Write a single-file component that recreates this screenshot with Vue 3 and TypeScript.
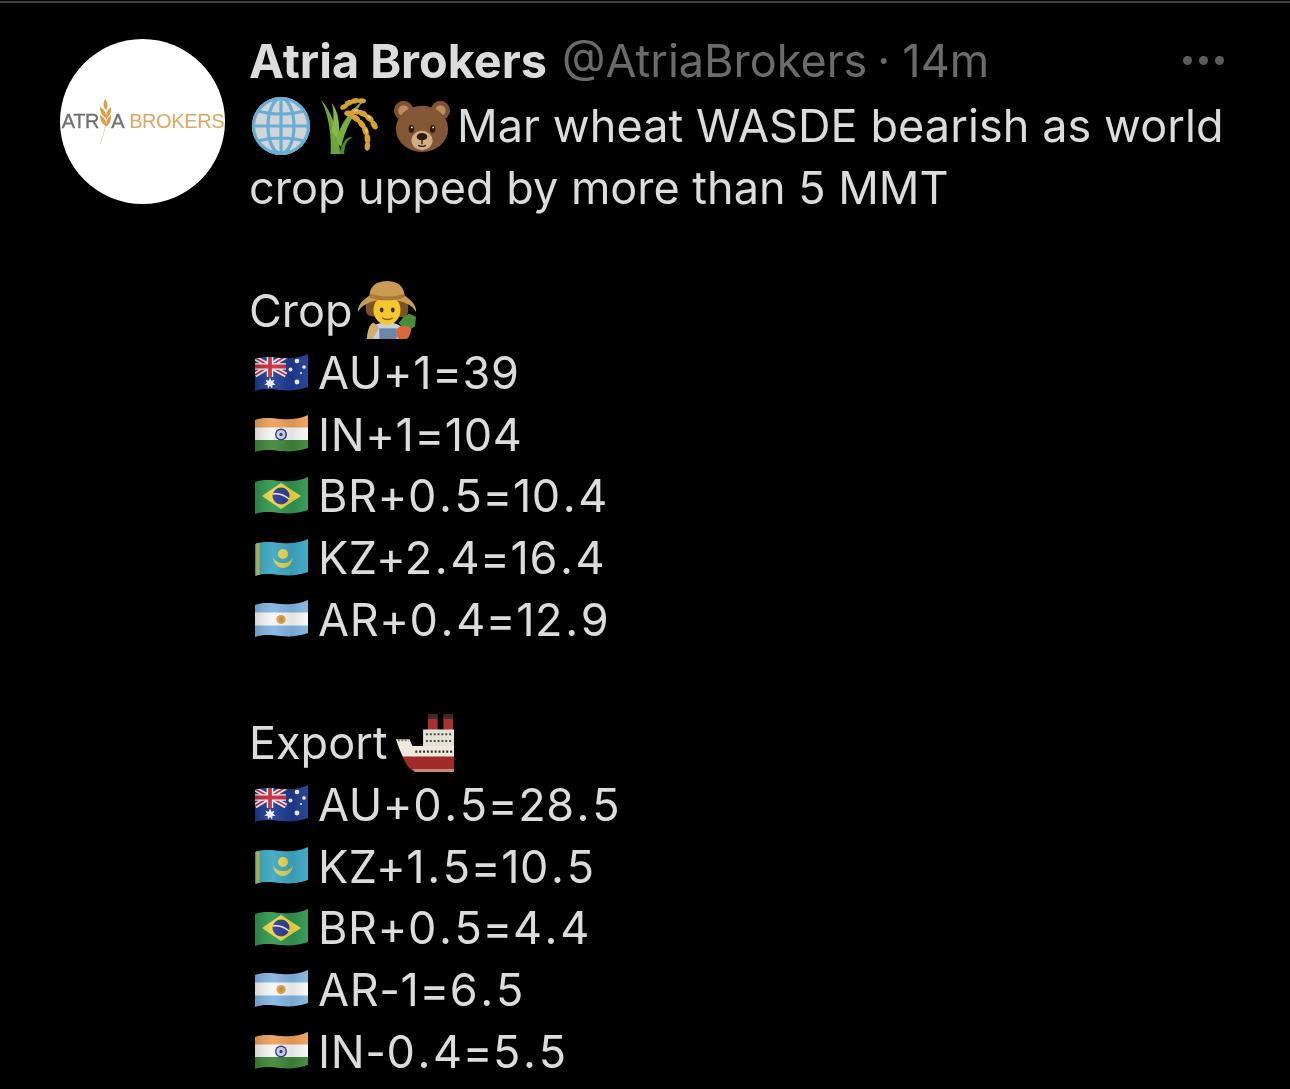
<script setup lang="ts">
interface Row { flag: string; text: string }
const crop: Row[] = [
  { flag: 'au', text: 'AU+1=39' },
  { flag: 'in', text: 'IN+1=104' },
  { flag: 'br', text: 'BR+0.5=10.4' },
  { flag: 'kz', text: 'KZ+2.4=16.4' },
  { flag: 'ar', text: 'AR+0.4=12.9' },
]
const exportRows: Row[] = [
  { flag: 'au', text: 'AU+0.5=28.5' },
  { flag: 'kz', text: 'KZ+1.5=10.5' },
  { flag: 'br', text: 'BR+0.5=4.4' },
  { flag: 'ar', text: 'AR-1=6.5' },
  { flag: 'in', text: 'IN-0.4=5.5' },
]
// Split on the decimal points so they can take the wider spacing of the reference.
const parts = (t: string): string[] => t.split(/(\.)/)
</script>

<template>
  <div class="screen">
    <svg class="defs" width="0" height="0" aria-hidden="true">
      <defs>
        <clipPath id="wave">
          <path d="M0 5C8 2 16 3 26 4S44 4 53 0V33C44 36 36 37 26 36S8 34 0 37Z" />
        </clipPath>
        <linearGradient id="shade" x1="0" x2="1" y1="0" y2="0">
          <stop offset="0" stop-color="#000" stop-opacity=".14" />
          <stop offset=".35" stop-color="#fff" stop-opacity=".08" />
          <stop offset=".7" stop-color="#000" stop-opacity=".08" />
          <stop offset="1" stop-color="#fff" stop-opacity=".06" />
        </linearGradient>
        <g id="flag-au" clip-path="url(#wave)">
          <rect width="53" height="38" fill="#1d3a8f" />
          <path d="M0 4L31 21M31 2L0 21" stroke="#f3f3f5" stroke-width="5" />
          <path d="M0 4L31 21M31 2L0 21" stroke="#c8283c" stroke-width="1.800" />
          <path d="M15 0V23M0 12.500H31" stroke="#f3f3f5" stroke-width="6.500" />
          <path d="M15 0V23M0 12.500H31" stroke="#c8283c" stroke-width="3.800" />
          <g fill="#f2f4fa">
            <path d="M15 23.500l1.400 3.200 3.200-1-1.600 3 2.700 2-3.300.4-.2 3.300-2.200-2.500-2.200 2.500-.2-3.300-3.300-.4 2.700-2-1.600-3 3.200 1z" />
            <circle cx="42" cy="7" r="2.300" />
            <circle cx="35.500" cy="15.500" r="2" />
            <circle cx="49" cy="13" r="1.800" />
            <circle cx="42" cy="28" r="2.400" />
            <circle cx="46" cy="19" r="1.100" />
          </g>
          <rect width="53" height="38" fill="url(#shade)" />
        </g>
        <g id="flag-in" clip-path="url(#wave)">
          <rect width="53" height="14" fill="#eda05a" />
          <rect y="12.500" width="53" height="13" fill="#f6f6f6" />
          <rect y="25" width="53" height="14" fill="#3c8636" />
          <circle cx="26" cy="19.500" r="6" fill="#2f3a86" />
          <circle cx="26" cy="19.500" r="4.500" fill="#cfd3e8" />
          <circle cx="26" cy="19.500" r="1.700" fill="#2f3a86" />
          <rect width="53" height="38" fill="url(#shade)" />
        </g>
        <g id="flag-br" clip-path="url(#wave)">
          <rect width="53" height="38" fill="#2f9650" />
          <path d="M7 19L26 6 46 19 26 32Z" fill="#f0d640" />
          <circle cx="26" cy="19" r="8.500" fill="#2c3a8e" />
          <path d="M18 17C24 16 29 18 34 22" stroke="#eef1f5" stroke-width="1.600" fill="none" />
          <rect width="53" height="38" fill="url(#shade)" />
        </g>
        <g id="flag-kz" clip-path="url(#wave)">
          <rect width="53" height="38" fill="#3ca6c2" />
          <rect x="1" width="3.500" height="38" fill="#bcc25a" />
          <circle cx="28" cy="15" r="5" fill="#e9d44b" />
          <path d="M18 18C19 25 23 29 28 29S37 25 38 18C36 22 33 24 28 24S20 22 18 18Z" fill="#d8cf50" />
          <rect width="53" height="38" fill="url(#shade)" />
        </g>
        <g id="flag-ar" clip-path="url(#wave)">
          <rect width="53" height="38" fill="#82b4e2" />
          <rect y="12.500" width="53" height="13" fill="#f7f7f7" />
          <circle cx="26" cy="19.500" r="4.600" fill="#d9a24b" />
          <circle cx="26" cy="19.500" r="2.200" fill="#c98c35" />
          <rect width="53" height="38" fill="url(#shade)" />
        </g>
      </defs>
    </svg>

    <div class="tweet">
      <div class="avatar">
        <div class="logo">
          <span class="logo-grey">ATR</span>
          <svg class="logo-wheat" viewBox="0 0 14 46" aria-hidden="true">
            <path d="M9 2C9 18 8 30 2 45" stroke="#e6d3b8" stroke-width="1" fill="none" />
            <path d="M7 0C5 4 5 8 8 11 10 8 10 4 7 0ZM2 8C2 13 4 17 8 19 9 15 6 10 2 8ZM13 8C9 11 8 15 8 20 11 18 14 13 13 8ZM2 16C2 21 4 25 8 27 9 23 6 18 2 16ZM13 16C9 19 8 23 8 28 11 26 14 21 13 16Z" fill="#dd9f48" />
          </svg>
          <span class="logo-grey">A</span>
          <span class="logo-gold">BROKERS</span>
        </div>
      </div>

      <div class="body">
        <div class="head">
          <span class="name">Atria Brokers</span>
          <span class="meta">@AtriaBrokers<span class="sep">·</span>14m</span>
          <span class="dots"><i></i><i></i><i></i></span>
        </div>

        <div class="line">
          <svg class="emoji globe" viewBox="0 0 60 60" aria-hidden="true">
            <circle cx="30" cy="30" r="29" fill="#d2d4d8" />
            <g fill="none" stroke="#68aed4" stroke-width="3.200">
              <circle cx="30" cy="30" r="27.500" />
              <ellipse cx="30" cy="30" rx="13" ry="27.500" />
              <path d="M30 2V58M2 30H58M7 15C20 19 40 19 53 15M7 45C20 41 40 41 53 45" />
            </g>
          </svg>
          <svg class="emoji wheat" viewBox="0 0 60 60" aria-hidden="true">
            <path d="M10 59C11 40 8 18 0 3 10 13 18 34 20 59Z" fill="#6ea53a" />
            <path d="M11 36C13 26 14 16 11 6 18 15 20 28 18 44Z" fill="#86b84a" />
            <path d="M16 46C18 30 30 14 44 3 34 18 24 34 21 52Z" fill="#7cad40" />
            <path d="M19 59C22 47 26 40 33 42 27 44 24 50 24 59Z" fill="#4f8a30" />
            <g fill="#d6a037">
              <ellipse cx="24" cy="10" rx="4.500" ry="2.600" transform="rotate(-30 24 10)" />
              <ellipse cx="29" cy="6" rx="4.500" ry="2.800" transform="rotate(-20 29 6)" />
              <ellipse cx="35" cy="4" rx="4.500" ry="2.800" transform="rotate(-10 35 4)" />
              <ellipse cx="42" cy="4" rx="4.500" ry="2.800" />
              <ellipse cx="29" cy="17" rx="5" ry="3" transform="rotate(5 29 17)" />
              <ellipse cx="36" cy="15" rx="5" ry="3" transform="rotate(10 36 15)" />
              <ellipse cx="43" cy="17" rx="5" ry="3" transform="rotate(25 43 17)" />
              <ellipse cx="50" cy="22" rx="5" ry="3" transform="rotate(40 50 22)" />
              <ellipse cx="55" cy="29" rx="5" ry="3" transform="rotate(60 55 29)" />
              <ellipse cx="36" cy="22" rx="5" ry="3" transform="rotate(35 36 22)" />
              <ellipse cx="42" cy="28" rx="5" ry="3" transform="rotate(50 42 28)" />
              <ellipse cx="46" cy="35" rx="5" ry="3" transform="rotate(70 46 35)" />
              <ellipse cx="48" cy="43" rx="5" ry="3" transform="rotate(85 48 43)" />
              <ellipse cx="48" cy="51" rx="4.500" ry="2.800" transform="rotate(95 48 51)" />
            </g>
            <g fill="#efc867">
              <ellipse cx="36" cy="14" rx="2.500" ry="1.100" />
              <ellipse cx="50" cy="21" rx="2.500" ry="1.100" transform="rotate(40 50 21)" />
              <ellipse cx="47" cy="35" rx="2.500" ry="1.100" transform="rotate(70 47 35)" />
            </g>
          </svg>
          <svg class="emoji bear" viewBox="0 0 60 60" aria-hidden="true">
            <circle cx="11" cy="14" r="10" fill="#7e5232" />
            <circle cx="49" cy="14" r="10" fill="#7e5232" />
            <circle cx="11" cy="14" r="5.500" fill="#bd8d62" />
            <circle cx="49" cy="14" r="5.500" fill="#bd8d62" />
            <ellipse cx="30" cy="33" rx="27" ry="24" fill="#835636" />
            <ellipse cx="30" cy="45" rx="11" ry="10" fill="#d3ae86" />
            <ellipse cx="19" cy="33" rx="2.800" ry="4" fill="#2c1a10" />
            <ellipse cx="41" cy="33" rx="2.800" ry="4" fill="#2c1a10" />
            <circle cx="19.500" cy="31.500" r=".9" fill="#fff" />
            <circle cx="41.500" cy="31.500" r=".9" fill="#fff" />
            <ellipse cx="30" cy="41" rx="5.500" ry="3.800" fill="#2a1b14" />
            <path d="M30 44V49M26 50C28 51.500 32 51.500 34 50" stroke="#2a1b14" stroke-width="1.400" fill="none" />
          </svg>
          <span class="first-text">Mar wheat WASDE bearish as world</span>
        </div>
        <div class="line"><span>crop upped by more than 5 MMT</span></div>
        <div class="line"></div>

        <div class="line">
          <span>Crop</span>
          <svg class="emoji farmer" viewBox="0 0 60 60" aria-hidden="true">
            <path d="M10 60C11 48 17 43 30 43S48 48 50 60Z" fill="#c8d0dc" />
            <path d="M9 60C10 50 12 45 16 43L22 48 15 60Z" fill="#d3ad6b" />
            <path d="M22 60V49H40V60Z" fill="#6b86a8" />
            <path d="M8 28C8 14 18 10 30 10S52 14 52 28 44 36 30 36 8 40 8 28Z" fill="#7a5326" />
            <ellipse cx="30" cy="30" rx="14" ry="15.500" fill="#f5c72e" />
            <path d="M0 32C-1 25 6 19 12 15 12 5 20 0 30 0S48 5 48 15C54 19 61 25 60 32 57 26 48 20 30 19 12 20 3 26 0 32Z" fill="#cb9b52" />
            <path d="M12 13C22 17 38 17 48 13V17C38 21 22 21 12 17Z" fill="#a97a35" />
            <ellipse cx="24.500" cy="30" rx="1.900" ry="2.500" fill="#3a2a10" />
            <ellipse cx="36" cy="30" rx="1.900" ry="2.500" fill="#3a2a10" />
            <path d="M25 38C28 40.500 33 40.500 36 38" stroke="#8a5a18" stroke-width="1.500" fill="none" />
            <path d="M42 44L47 37 53 34 60 37 59 47 54 50 47 49Z" fill="#4d8c3a" />
            <path d="M40 50C44 45 52 45 55 50 55 54 52 60 50 60H42C40 58 39 54 40 50Z" fill="#d9683a" />
          </svg>
        </div>
        <div v-for="r in crop" :key="r.flag" class="line">
          <svg class="flag" viewBox="0 0 53 38" aria-hidden="true"><use :href="'#flag-' + r.flag" /></svg>
          <span class="figure"><span v-for="(p, i) in parts(r.text)" :key="i" :class="{ point: p === '.' }">{{ p }}</span></span>
        </div>
        <div class="line"></div>

        <div class="line">
          <span>Export</span>
          <svg class="emoji ship" viewBox="0 0 60 60" aria-hidden="true">
            <rect x="33" y="2" width="10" height="18" fill="#a83230" />
            <rect x="49" y="2" width="10" height="18" fill="#a83230" />
            <rect x="33" y="0" width="10" height="5" fill="#3a2a2a" />
            <rect x="49" y="0" width="10" height="5" fill="#3a2a2a" />
            <path d="M28 16H60V42H28Z" fill="#e4e2d8" />
            <path d="M31 21H59M31 28H59" stroke="#4a4a44" stroke-width="2" stroke-dasharray="2 2" />
            <path d="M0 26H14L17 33H60V46H8C5 40 2 33 0 26Z" fill="#eee9dc" />
            <path d="M2 27H13" stroke="#7c7c70" stroke-width="2.400" stroke-dasharray="2 1.500" />
            <path d="M20 39H59" stroke="#2a2a28" stroke-width="2.400" stroke-dasharray="2 2" />
            <path d="M7 44H60V60H20C14 58 10 52 7 44Z" fill="#a02c2a" />
            <path d="M17 57H60V60H20Z" fill="#c8897a" />
          </svg>
        </div>
        <div v-for="r in exportRows" :key="r.flag" class="line">
          <svg class="flag" viewBox="0 0 53 38" aria-hidden="true"><use :href="'#flag-' + r.flag" /></svg>
          <span class="figure"><span v-for="(p, i) in parts(r.text)" :key="i" :class="{ point: p === '.' }">{{ p }}</span></span>
        </div>
      </div>
    </div>
  </div>
</template>

<style>
html, body { margin: 0; background: #000; }
</style>

<style scoped>
.screen {
  width: 1290px;
  height: 1089px;
  overflow: hidden;
  background: #000;
  border-top: 2px solid #3f3f3f;
  margin-top: 1px;
  box-sizing: border-box;
  font-family: Inter, "Noto Sans", sans-serif;
  color: #dcdcdc;
  filter: blur(0.4px);
}
.defs { position: absolute; }
.tweet {
  display: flex;
  gap: 24px;
  padding: 26px 66px 0 60px;
}
.avatar {
  flex: none;
  width: 165px;
  height: 165px;
  margin-top: 10px;
  border-radius: 50%;
  background: #fff;
  display: flex;
  align-items: center;
  justify-content: center;
  overflow: hidden;
}
.logo {
  display: flex;
  align-items: center;
  white-space: nowrap;
  font-family: "Liberation Sans", sans-serif;
  font-size: 20px;
  letter-spacing: -0.4px;
  margin-left: 1px;
}
.logo-grey { color: #6f6e72; -webkit-text-stroke: 0.3px currentColor; }
.logo-gold { color: #dba863; margin-left: 5px; }
.logo-wheat { flex: none; width: 14px; height: 46px; margin: 0 -1px; }
.body { flex: 1; min-width: 0; }
.head {
  display: flex;
  align-items: center;
  height: 66px;
  font-size: 45px;
}
.name { font-weight: 700; font-size: 46.800px; margin-top: -3px; }
.meta { margin-left: 15px; color: #6b6b6b; margin-top: -3px; }
.sep { margin: 0 12px 0 10px; }
.dots { margin-left: auto; display: flex; gap: 7px; margin-top: -3px; }
.dots i { width: 9px; height: 9px; border-radius: 50%; background: #5c5c5c; }
.line {
  display: flex;
  align-items: center;
  height: 61.7px;
  font-size: 45px;
  white-space: pre;
}
.emoji { flex: none; width: 58px; height: 58px; }
.globe { width: 60px; height: 60px; margin-left: 2px; }
.wheat { margin-left: 10px; }
.bear { margin-left: 14px; }
.first-text { margin-left: 6px; letter-spacing: 0.08px; }
.farmer { margin: -2px 0 0 5px; }
.ship { margin: 0 0 0 8px; }
.flag { flex: none; width: 53px; height: 38px; margin: 0 10px 0 6px; }
.figure { letter-spacing: 0.6px; }
.point { margin: 0 2px; }
</style>
